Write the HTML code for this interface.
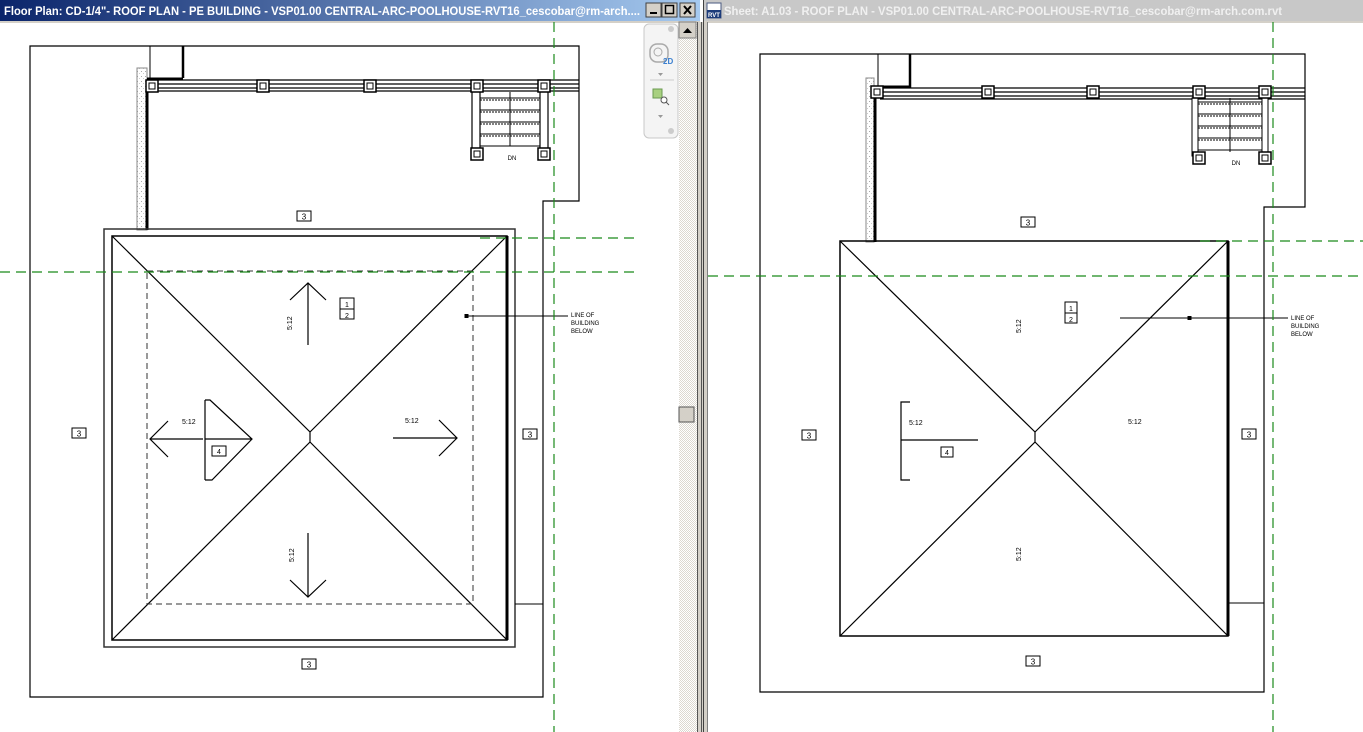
<!DOCTYPE html>
<html><head><meta charset="utf-8"><style>
html,body{margin:0;padding:0;width:1363px;height:732px;overflow:hidden;background:#fff;font-family:"Liberation Sans",sans-serif}
svg{display:block}
</style></head><body>
<svg width="1363" height="732" viewBox="0 0 1363 732" xmlns="http://www.w3.org/2000/svg" font-family="Liberation Sans, sans-serif">
<defs>
<linearGradient id="tb" x1="0" x2="1"><stop offset="0" stop-color="#0a246a"/><stop offset="1" stop-color="#a6caf0"/></linearGradient>
<pattern id="hat" width="2" height="2" patternUnits="userSpaceOnUse"><rect width="2" height="2" fill="#fff"/><rect width="1" height="1" fill="#dcd8d0"/><rect x="1" y="1" width="1" height="1" fill="#dcd8d0"/></pattern>
<pattern id="conc" width="4" height="5" patternUnits="userSpaceOnUse"><rect width="4" height="5" fill="#fff"/><rect x="1" y="1" width="1" height="1" fill="#aaa"/><rect x="3" y="3" width="1" height="1" fill="#ccc"/></pattern>
<g id="post"><rect x="-6" y="-6" width="12" height="12" fill="#fff" stroke="#000" stroke-width="1.5"/><rect x="-3" y="-3" width="6" height="6" fill="#fff" stroke="#000"/></g>
<g id="tag3"><rect x="-7" y="-5" width="14" height="10" fill="#fff" stroke="#000"/><text x="0" y="3.5" font-size="8" text-anchor="middle">3</text></g>
</defs>

<!-- LEFT WINDOW -->
<rect x="0" y="0" width="700" height="21" fill="url(#tb)"/>
<text x="4" y="15" font-size="12" font-weight="bold" fill="#fff" textLength="636" lengthAdjust="spacingAndGlyphs">Floor Plan: CD-1/4"- ROOF PLAN - PE BUILDING - VSP01.00 CENTRAL-ARC-POOLHOUSE-RVT16_cescobar@rm-arch....</text>
<g fill="#d4d0c8">
<rect x="646" y="3" width="15" height="14" stroke="#404040"/><rect x="662" y="3" width="15" height="14" stroke="#404040"/><rect x="680" y="3" width="15" height="14" stroke="#404040"/>
</g>
<rect x="650" y="12" width="7" height="2" fill="#000"/>
<rect x="665.5" y="5.5" width="8" height="8" fill="none" stroke="#000" stroke-width="1.5"/>
<path d="M684 6l7 8M691 6l-7 8" stroke="#000" stroke-width="2"/>
<rect x="0" y="21" width="700" height="2" fill="#d4d0c8"/>

<!-- scrollbar -->
<rect x="679" y="22" width="18" height="710" fill="url(#hat)"/>
<rect x="679" y="22" width="17" height="16" fill="#d4d0c8" stroke="#808080"/>
<path d="M683 33h9l-4.5-5z" fill="#000"/>
<rect x="679" y="407" width="15" height="15" fill="#d4d0c8" stroke="#555"/>
<rect x="697" y="22" width="7" height="710" fill="#d4d0c8"/>
<rect x="697" y="22" width="1" height="710" fill="#555"/>
<rect x="701" y="22" width="1" height="710" fill="#555"/>
<rect x="703" y="0" width="1" height="732" fill="#404040"/>

<!-- nav bar -->
<rect x="644" y="24" width="34" height="114" rx="5" fill="#f4f4f4" stroke="#c8c8c8"/>
<circle cx="671" cy="29" r="3" fill="#ccc"/>
<rect x="650" y="44" width="18" height="18" rx="7" fill="none" stroke="#aaa" stroke-width="1.5"/>
<circle cx="658" cy="52" r="4" fill="none" stroke="#aaa"/>
<text x="663" y="64" font-size="8" font-weight="bold" fill="#3a7fd0">2D</text>
<path d="M658 73h5l-2.5 3z" fill="#999"/>
<line x1="650" y1="80" x2="674" y2="80" stroke="#ccc"/>
<rect x="653" y="89" width="9" height="9" fill="#a8d080" stroke="#6a9a50"/>
<circle cx="664" cy="100" r="3" fill="#fff" stroke="#555"/>
<path d="M666 102l3 3" stroke="#555"/>
<path d="M658 115h5l-2.5 3z" fill="#999"/>
<circle cx="671" cy="131" r="3" fill="#ccc"/>

<!-- LEFT DRAWING -->
<g fill="none" stroke="#000">
<path d="M30 46H579V201H543V697H30Z" stroke-width="1.2"/>
<path d="M150 46V78" stroke-width="1"/><path d="M183 46V78" stroke-width="2.5"/>
<rect x="137" y="68" width="10" height="162" fill="url(#conc)" stroke="#888"/>
<path d="M147 80V230" stroke-width="3"/>
<path d="M147 80H579M147 84H579M152 88H579M152 91H579" stroke-width="1.2"/>
<path d="M147 79H183" stroke-width="3"/>
<rect x="472" y="90" width="8" height="62" fill="#fff" stroke-width="1.2"/><rect x="540" y="90" width="8" height="62" fill="#fff" stroke-width="1.2"/>
<path d="M480 98H540M480 110H540M480 122H540M480 134H540M480 146H540M510 92V146" stroke-width="1"/>
<path d="M480 100H540M480 112H540M480 124H540M480 136H540" stroke-dasharray="2 1"/>
</g>
<use href="#post" x="152" y="86"/><use href="#post" x="263" y="86"/><use href="#post" x="370" y="86"/><use href="#post" x="477" y="86"/><use href="#post" x="544" y="86"/>
<use href="#post" x="477" y="154"/><use href="#post" x="544" y="154"/>
<text x="512" y="160" font-size="6" text-anchor="middle">DN</text>

<g fill="none" stroke="#000">
<rect x="104" y="229" width="411" height="418" stroke-width="1.5" stroke="#333"/>
<rect x="112" y="236" width="395" height="404" stroke-width="1.5"/>
<path d="M507 236V640" stroke-width="3"/>
<path d="M112 236L310 432V442L112 640M507 236L310 432M310 442L507 640" stroke-width="1.2"/>
<rect x="147" y="271" width="326" height="333" stroke-dasharray="6 4" stroke="#333"/>
<path d="M515 604H543" />
<path d="M308 283V345M290 300L308 283L326 300" stroke-width="1.2"/>
<path d="M308 533V597M290 580L308 597L326 580" stroke-width="1.2"/>
<path d="M150 439H203M168 421L150 439L168 457" stroke-width="1.2"/>
<path d="M393 438H457M439 420L457 438L439 456" stroke-width="1.2"/>
<path d="M205 439H252M205 400V480M205 400H210L252 439L212 480H205" stroke-width="1.2"/>
<path d="M466 316H568" /><rect x="465" y="314.5" width="3" height="3" fill="#000"/>
</g>
<rect x="212" y="446" width="14" height="10" fill="#fff" stroke="#000"/><text x="219" y="454" font-size="7" text-anchor="middle">4</text>
<rect x="340" y="298" width="14" height="21" fill="#fff" stroke="#000"/><line x1="340" y1="309" x2="354" y2="309" stroke="#000"/>
<text x="347" y="307" font-size="7" text-anchor="middle">1</text><text x="347" y="318" font-size="7" text-anchor="middle">2</text>
<g font-size="7" fill="#000">
<text x="182" y="424">5:12</text><text x="405" y="423">5:12</text>
<text transform="translate(292,330) rotate(-90)">5:12</text>
<text transform="translate(294,562) rotate(-90)">5:12</text>
<text x="571" y="317" font-size="6">LINE OF</text><text x="571" y="325" font-size="6">BUILDING</text><text x="571" y="333" font-size="6">BELOW</text>
</g>
<use href="#tag3" x="304" y="216"/><use href="#tag3" x="79" y="433"/><use href="#tag3" x="530" y="434"/><use href="#tag3" x="309" y="664"/>
<g stroke="#1a8a1a" stroke-width="1.2" stroke-dasharray="10 6" fill="none">
<path d="M0 272H640"/><path d="M480 238H640"/><path d="M554 22V732"/>
</g>

<!-- RIGHT WINDOW -->
<rect x="704" y="0" width="659" height="21" fill="#c8c8c8"/>
<rect x="707" y="3" width="14" height="15" fill="#fff" stroke="#4a5a80"/><rect x="707" y="10" width="14" height="8" fill="#1c3b7a"/>
<text x="708" y="17" font-size="6" fill="#fff" font-weight="bold">RVT</text>
<text x="724" y="15" font-size="12" font-weight="bold" fill="#f0f0f0" textLength="558" lengthAdjust="spacingAndGlyphs">Sheet: A1.03 - ROOF PLAN - VSP01.00 CENTRAL-ARC-POOLHOUSE-RVT16_cescobar@rm-arch.com.rvt</text>
<rect x="704" y="21" width="659" height="2" fill="#d4d0c8"/>
<rect x="704" y="21" width="3" height="711" fill="#d4d0c8"/><rect x="707" y="22" width="1" height="710" fill="#808080"/>

<g fill="none" stroke="#000">
<path d="M760 54H1305V207H1264V692H760Z" stroke-width="1.2"/>
<path d="M878 54V88" /><path d="M910 54V88" stroke-width="2.5"/>
<rect x="866" y="78" width="8" height="164" fill="url(#conc)" stroke="#888"/>
<path d="M875 88V242" stroke-width="3"/>
<path d="M875 88H1305M875 92H1305M880 96H1305M880 99H1305" stroke-width="1.2"/>
<path d="M875 87H910" stroke-width="3"/>
<rect x="1192" y="98" width="6" height="58" fill="#fff"/><rect x="1262" y="98" width="6" height="58" fill="#fff"/>
<path d="M1198 102H1262M1198 114H1262M1198 126H1262M1198 138H1262M1198 150H1262M1230 98V152"/>
<path d="M1198 104H1262M1198 116H1262M1198 128H1262M1198 140H1262" stroke-dasharray="2 1"/>
</g>
<use href="#post" x="877" y="92"/><use href="#post" x="988" y="92"/><use href="#post" x="1093" y="92"/><use href="#post" x="1199" y="92"/><use href="#post" x="1265" y="92"/>
<use href="#post" x="1199" y="158"/><use href="#post" x="1265" y="158"/>
<text x="1236" y="165" font-size="6" text-anchor="middle">DN</text>

<g fill="none" stroke="#000">
<rect x="840" y="241" width="388" height="395" stroke-width="1.5"/>
<path d="M1228 241V636" stroke-width="3"/>
<path d="M840 241L1035 432V442L840 636M1228 241L1035 432M1035 442L1228 636" stroke-width="1.2"/>
<path d="M1228 603H1264"/>
<path d="M910 402H901V480H910M901 440H978" stroke-width="1.2"/>
<path d="M1120 318H1288"/><rect x="1188" y="316.5" width="3" height="3" fill="#000"/>
</g>
<rect x="941" y="447" width="12" height="10" fill="#fff" stroke="#000"/><text x="947" y="455" font-size="7" text-anchor="middle">4</text>
<rect x="1065" y="302" width="12" height="21" fill="#fff" stroke="#000"/><line x1="1065" y1="313" x2="1077" y2="313" stroke="#000"/>
<text x="1071" y="311" font-size="7" text-anchor="middle">1</text><text x="1071" y="322" font-size="7" text-anchor="middle">2</text>
<g font-size="7" fill="#000">
<text x="909" y="425">5:12</text><text x="1128" y="424">5:12</text>
<text transform="translate(1021,333) rotate(-90)">5:12</text>
<text transform="translate(1021,561) rotate(-90)">5:12</text>
<text x="1291" y="320" font-size="6">LINE OF</text><text x="1291" y="328" font-size="6">BUILDING</text><text x="1291" y="336" font-size="6">BELOW</text>
</g>
<use href="#tag3" x="1028" y="222"/><use href="#tag3" x="809" y="435"/><use href="#tag3" x="1249" y="434"/><use href="#tag3" x="1033" y="661"/>
<g stroke="#1a8a1a" stroke-width="1.2" stroke-dasharray="10 6" fill="none">
<path d="M708 276H1363"/><path d="M1200 241H1363"/><path d="M1273 22V732"/>
</g>
</svg>
</body></html>
